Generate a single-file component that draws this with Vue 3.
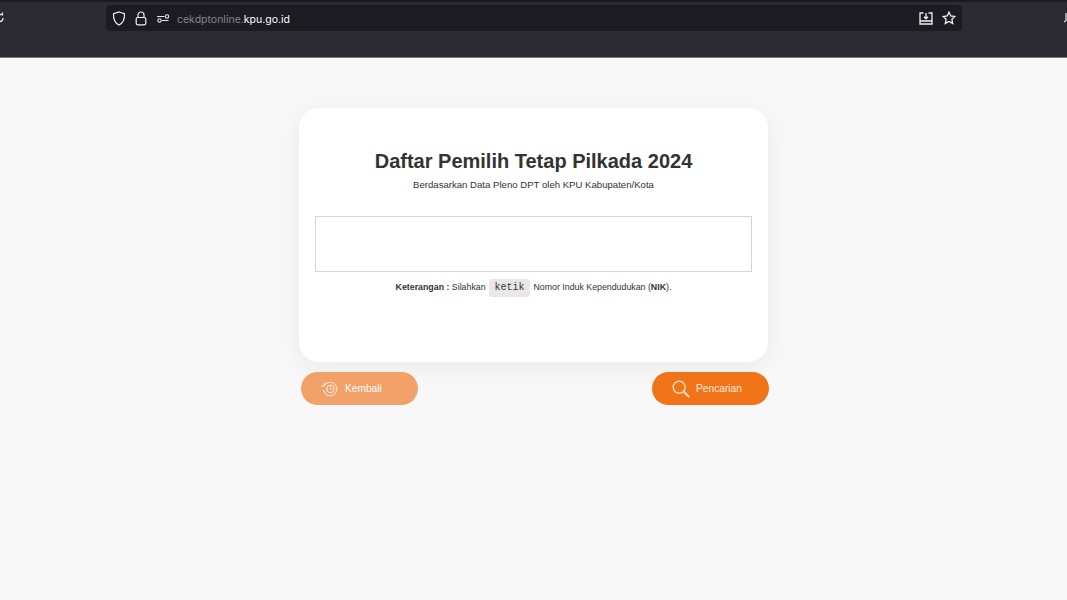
<template>
  <div class="page">
    <!-- browser chrome -->
    <header class="chrome">
      <div class="chrome__edge">
        <svg class="chrome__reload" width="4" height="12" viewBox="0 0 4 12" fill="none" stroke="#e6e6e9" stroke-width="1.3">
          <path d="M0 2.5h2.5M2.5 0.500v3M0 9.500c2 0 3-1.500 3-3.500" />
        </svg>
      </div>
      <div class="urlbar">
        <svg class="icon" width="14" height="15" viewBox="0 0 14 15" fill="none" stroke="#f0f0f3" stroke-width="1.200">
          <path d="M7 1l5.500 1.800c.2 5-1 9.200-5.500 11.200C2.500 12 1.300 7.800 1.500 2.800z" />
        </svg>
        <svg class="icon" width="12" height="15" viewBox="0 0 12 15" fill="none" stroke="#f0f0f3" stroke-width="1.200">
          <path d="M3 6.500V4a3 3 0 0 1 6 0v2.500" />
          <rect x="1.200" y="6.500" width="9.600" height="7.300" rx="1.500" />
        </svg>
        <svg class="icon icon--tune" width="13" height="9" viewBox="0 0 13 9" fill="none" stroke="#e6e6e9" stroke-width="1.100">
          <path d="M0 2.500h7.500M11.500 6.500H5" />
          <circle cx="10" cy="2.500" r="1.700" />
          <circle cx="2.500" cy="6.500" r="1.700" />
        </svg>
        <span class="url"><span class="url__dim">cekdptonline.</span>kpu.go.id</span>
        <span class="urlbar__spacer"></span>
        <svg class="icon" width="14" height="13" viewBox="0 0 14 13" fill="none" stroke="#f0f0f3" stroke-width="1.300">
          <path d="M4.500 1H1v11h12V1H9.500M1 9h12" />
          <path d="M7 1v5.500M5 4.800l2 2 2-2" />
        </svg>
        <svg class="icon" width="14" height="14" viewBox="0 0 14 14" fill="none" stroke="#f0f0f3" stroke-width="1.300">
          <path d="M7 1.200l1.800 3.800 4.100.5-3 2.800.8 4.100L7 10.400l-3.700 2 .8-4.100-3-2.800 4.100-.5z" />
        </svg>
      </div>
      <div class="chrome__right">
        <svg width="3" height="10" viewBox="0 0 3 10" fill="none" stroke="#e6e6e9" stroke-width="1.200">
          <path d="M2 0v7.500L0 9" />
        </svg>
      </div>
    </header>

    <main class="content">
      <section class="card">
        <h1 class="card__title">Daftar Pemilih Tetap Pilkada 2024</h1>
        <p class="card__sub">Berdasarkan Data Pleno DPT oleh KPU Kabupaten/Kota</p>
        <input class="card__input" type="text" />
        <p class="card__note">
          <b>Keterangan :</b> Silahkan <code class="kbd">ketik</code> Nomor Induk Kependudukan (<b>NIK</b>).
        </p>
      </section>

      <div class="actions">
        <button type="button" class="btn btn--back">
          <svg width="18" height="17" viewBox="0 0 18 17" fill="none" stroke="#fff" stroke-width="1" stroke-opacity=".85">
            <path d="M3.300 5.500a6.800 6.800 0 1 1-.9 4.500" />
            <path d="M3.500 2.800v3h-3" />
            <circle cx="9.500" cy="9" r="3.800" />
            <path d="M9.500 6.800V9l1.500 1" />
          </svg>
          <span>Kembali</span>
        </button>
        <button type="button" class="btn btn--search">
          <svg width="18" height="18" viewBox="0 0 18 18" fill="none" stroke="#fde3c8" stroke-width="1.300">
            <circle cx="7.200" cy="7.200" r="6" />
            <path d="M11.500 11.500l5.700 5.500" stroke-width="1.900" />
          </svg>
          <span>Pencarian</span>
        </button>
      </div>
    </main>
  </div>
</template>

<script setup>
</script>

<style>
html, body {
  margin: 0;
  background: #f8f8f8;
}
</style>

<style scoped>
.page {
  width: 1067px;
  height: 600px;
  overflow: hidden;
  background: #f8f8f8;
  font-family: "Liberation Sans", Arial, sans-serif;
}

.chrome {
  height: 58px;
  box-sizing: border-box;
  border-top: 2px solid #1b1a23;
  border-bottom: 1px solid #77777c;
  background: #2b2a33;
  display: flex;
  align-items: flex-start;
}
.chrome__edge {
  width: 106px;
  padding-top: 10px;
}
.chrome__reload {
  display: block;
}
.chrome__right {
  flex: 1;
  padding-top: 11px;
  display: flex;
  justify-content: flex-end;
}

.urlbar {
  width: 856px;
  height: 26px;
  margin-top: 3px;
  box-sizing: border-box;
  padding: 0 6px;
  display: flex;
  align-items: center;
  gap: 9px;
  background: #1c1b22;
  border-radius: 4px;
}
.urlbar__spacer {
  flex: 1;
}
.icon {
  flex: none;
}
.icon--tune {
  margin-left: 1px;
}
.url {
  margin: 2px 0 0 -2px;
  font-family: Inter, "Liberation Sans", sans-serif;
  font-size: 10.500px;
  color: #fbfbfe;
}
.url__dim {
  color: #85858c;
}

.content {
  width: 469px;
  margin: 50px auto 0;
}

.card {
  height: 254px;
  box-sizing: border-box;
  padding: 42px 16px 0;
  background: #fff;
  border-radius: 20px;
  box-shadow: 0 6px 24px rgba(0, 0, 0, .06);
  text-align: center;
}
.card__title {
  margin: 0;
  font-size: 20px;
  line-height: 23px;
  font-weight: 700;
  color: #333;
}
.card__sub {
  margin: 5px 0 0;
  font-size: 9.600px;
  line-height: 14px;
  color: #333;
}
.card__input {
  display: block;
  width: 100%;
  height: 56px;
  margin-top: 24px;
  box-sizing: border-box;
  background: #fff;
  border: 1px solid #d8d4d4;
  outline: none;
}
.card__note {
  margin: 6px 0 0;
  font-size: 8.800px;
  line-height: 18px;
  color: #333;
}
.kbd {
  display: inline-block;
  padding: 0 5.500px;
  margin: 0 1px;
  font-family: "Liberation Mono", monospace;
  font-size: 10px;
  line-height: 18px;
  background: #ebe7e7;
  border-radius: 3px;
}

.actions {
  margin: 10px -1px 0 0;
  padding-left: 2px;
  display: flex;
  justify-content: space-between;
}
.btn {
  width: 117px;
  height: 33px;
  padding: 0 0 0 20px;
  display: flex;
  align-items: center;
  gap: 6px;
  border: none;
  border-radius: 17px;
  font-family: inherit;
  font-size: 10.200px;
  color: #fff;
}
.btn--back {
  background: #f2a268;
}
.btn--search {
  background: #f27418;
  color: #fdeee0;
}
</style>
